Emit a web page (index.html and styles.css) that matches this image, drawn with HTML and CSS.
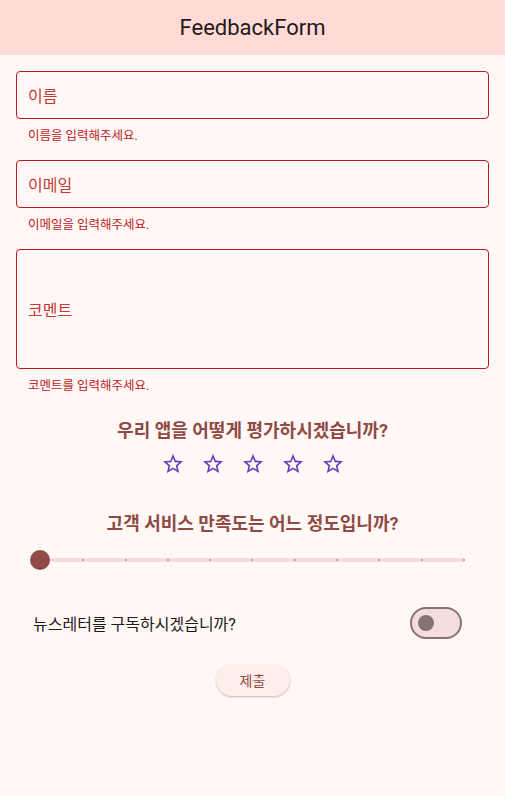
FILE: index.html
```html
<!DOCTYPE html>
<html lang="ko">
<head>
  <meta charset="UTF-8">
  <title>FeedbackForm</title>
  <link rel="stylesheet" href="styles.css">
</head>
<body>
  <header class="app-bar">FeedbackForm</header>

  <main class="form">
    <div class="field-group">
      <div class="field"><span class="label">이름</span></div>
      <div class="helper">이름을 입력해주세요.</div>
    </div>
    <div class="field-group">
      <div class="field"><span class="label">이메일</span></div>
      <div class="helper">이메일을 입력해주세요.</div>
    </div>
    <div class="field-group">
      <div class="field field-tall"><span class="label">코멘트</span></div>
      <div class="helper">코멘트를 입력해주세요.</div>
    </div>

    <h3 class="question q-rating">우리 앱을 어떻게 평가하시겠습니까?</h3>
    <div class="stars">
      <span class="star"><svg viewBox="0 0 24 24" width="24" height="24"><path d="M22 9.24l-7.19-.62L12 2 9.19 8.630 2 9.24l5.46 4.73L5.82 21 12 17.27 18.18 21l-1.63-7.03L22 9.24zM12 15.4l-3.76 2.27 1-4.28-3.32-2.88 4.38-.38L12 6.1l1.71 4.04 4.38.38-3.32 2.88 1 4.28L12 15.4z"/></svg></span>
      <span class="star"><svg viewBox="0 0 24 24" width="24" height="24"><path d="M22 9.24l-7.19-.62L12 2 9.19 8.63 2 9.24l5.46 4.73L5.82 21 12 17.27 18.18 21l-1.63-7.03L22 9.24zM12 15.4l-3.76 2.27 1-4.28-3.32-2.88 4.38-.38L12 6.1l1.71 4.04 4.38.38-3.32 2.88 1 4.28L12 15.4z"/></svg></span>
      <span class="star"><svg viewBox="0 0 24 24" width="24" height="24"><path d="M22 9.24l-7.19-.62L12 2 9.19 8.63 2 9.24l5.46 4.73L5.82 21 12 17.27 18.18 21l-1.63-7.03L22 9.24zM12 15.4l-3.76 2.27 1-4.28-3.32-2.88 4.38-.38L12 6.1l1.71 4.04 4.38.38-3.32 2.88 1 4.28L12 15.4z"/></svg></span>
      <span class="star"><svg viewBox="0 0 24 24" width="24" height="24"><path d="M22 9.24l-7.19-.62L12 2 9.19 8.63 2 9.24l5.46 4.73L5.82 21 12 17.27 18.18 21l-1.63-7.03L22 9.24zM12 15.4l-3.76 2.27 1-4.28-3.32-2.88 4.38-.38L12 6.1l1.71 4.04 4.38.38-3.32 2.88 1 4.28L12 15.4z"/></svg></span>
      <span class="star"><svg viewBox="0 0 24 24" width="24" height="24"><path d="M22 9.24l-7.19-.62L12 2 9.19 8.63 2 9.24l5.46 4.73L5.82 21 12 17.27 18.18 21l-1.63-7.03L22 9.24zM12 15.4l-3.76 2.27 1-4.28-3.32-2.88 4.38-.38L12 6.1l1.71 4.04 4.38.38-3.32 2.88 1 4.28L12 15.4z"/></svg></span>
    </div>

    <h3 class="question q-service">고객 서비스 만족도는 어느 정도입니까?</h3>
    <div class="slider">
      <div class="track">
        <span class="tick"></span><span class="tick"></span><span class="tick"></span>
        <span class="tick"></span><span class="tick"></span><span class="tick"></span>
        <span class="tick"></span><span class="tick"></span><span class="tick"></span>
        <span class="tick"></span><span class="tick"></span>
        <span class="thumb"></span>
      </div>
    </div>

    <div class="switch-row">
      <span class="switch-label">뉴스레터를 구독하시겠습니까?</span>
      <span class="switch"><span class="switch-thumb"></span></span>
    </div>

    <div class="actions">
      <button class="submit">제출</button>
    </div>
  </main>
</body>
</html>
```

FILE: styles.css
```css
/* Reset básico */
html, body {
  margin: 0;
  padding: 0;
  background: #fff8f7;
  color: #231918;
  font-family: Roboto, 'Noto Sans CJK KR', sans-serif;
}

.app-bar {
  height: 55px;
  background: #ffdad6;
  color: #231918;
  font-size: 22px;
  display: flex;
  align-items: center;
  justify-content: center;
}

.form {
  padding: 16px;
  display: flex;
  flex-direction: column;
}

.field-group {
  margin-bottom: 16px;
}

.field {
  height: 48px;
  box-sizing: border-box;
  border: 1px solid #ba1a1a;
  border-radius: 4px;
  padding: 0 11px;
  display: flex;
  align-items: center;
}

.field-tall {
  height: 120px;
}

.label {
  color: #c43a35;
  font-size: 16px;
}

.helper {
  color: #ba1a1a;
  font-size: 12.5px;
  line-height: 17px;
  padding: 8px 12px 0 12px;
}

.question {
  margin: 0;
  text-align: center;
  color: #8f4a43;
  font-size: 18px;
  font-weight: bold;
  line-height: 26px;
}

.q-rating {
  margin-top: 8px;
}

.q-service {
  margin-top: 27px;
}

.stars {
  display: flex;
  justify-content: center;
  height: 40px;
}

.star {
  width: 40px;
  height: 40px;
  display: flex;
  align-items: center;
  justify-content: center;
}

.star svg {
  fill: #673ab7;
}

.slider {
  height: 46px;
  padding: 0 24px;
  display: flex;
  align-items: center;
}

.track {
  position: relative;
  flex: 1;
  height: 4px;
  background: #f3dcda;
  border-radius: 2px;
  display: flex;
  align-items: center;
  justify-content: space-between;
}

.tick {
  width: 2px;
  height: 2px;
  border-radius: 1px;
  background: #a8928f;
}

.thumb {
  position: absolute;
  left: -10px;
  top: -8px;
  width: 20px;
  height: 20px;
  border-radius: 50%;
  background: #8f4a43;
}

.switch-row {
  margin-top: 12px;
  height: 56px;
  padding: 0 27px 0 17px;
  display: flex;
  align-items: center;
  justify-content: space-between;
}

.switch-label {
  font-size: 16px;
  color: #231918;
}

.switch {
  width: 52px;
  height: 32px;
  box-sizing: border-box;
  border: 2px solid #857371;
  border-radius: 16px;
  background: #f5dddb;
  display: flex;
  align-items: center;
  padding-left: 6px;
}

.switch-thumb {
  width: 16px;
  height: 16px;
  border-radius: 50%;
  background: #857371;
}

.actions {
  margin-top: 13px;
  display: flex;
  justify-content: center;
}

.submit {
  width: 74px;
  height: 32px;
  border: none;
  border-radius: 16px;
  background: #fdeeec;
  color: #8f4a43;
  font-family: Roboto, 'Noto Sans CJK KR', sans-serif;
  font-size: 14px;
  box-shadow: 0 1px 2px rgba(0, 0, 0, 0.25);
  cursor: pointer;
}
```
